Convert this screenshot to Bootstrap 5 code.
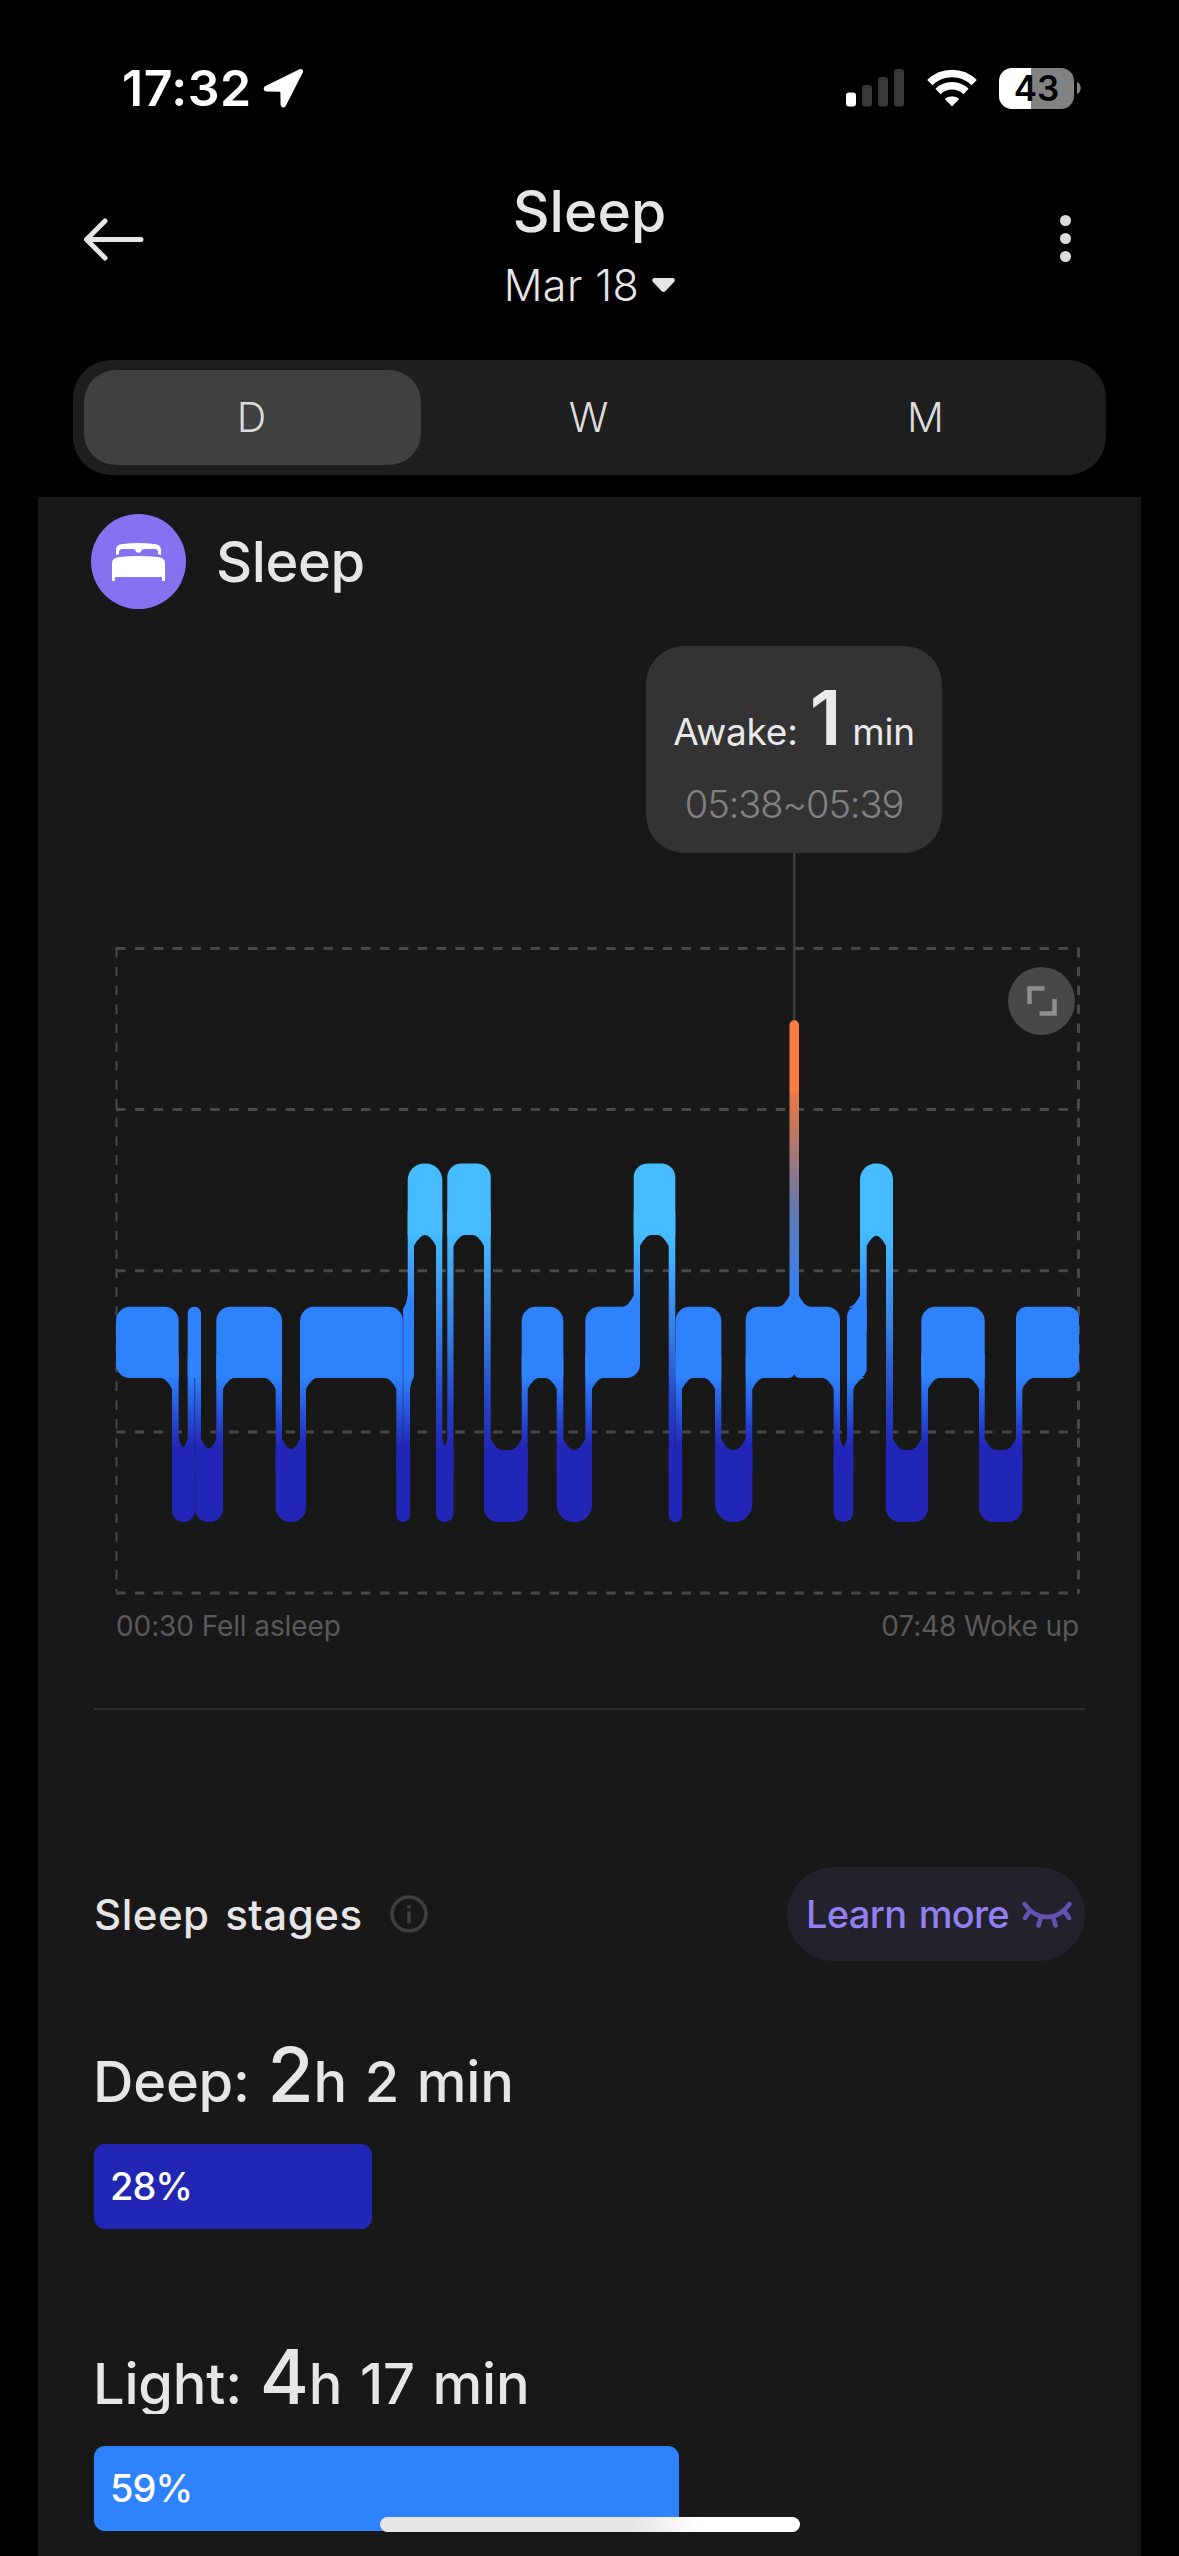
<!DOCTYPE html>
<html lang="en">
<head>
<meta charset="utf-8">
<meta name="viewport" content="width=device-width, initial-scale=1">
<title>Sleep</title>
<link rel="stylesheet" href="https://cdn.jsdelivr.net/npm/bootstrap@5.3.0/dist/css/bootstrap.min.css">
<style>
  body { background:#000; color:#e6e6e6; font-family:Inter,"Liberation Sans",sans-serif; width:1179px; height:2556px; overflow:hidden; position:relative; }
  svg { display:block; }
  .statusbar { height:176px; padding:0 98px 0 122px; color:#fff; }
  .clock { font-size:50px; font-weight:600; line-height:60px; letter-spacing:.5px; width:141px; white-space:nowrap; }
  .wifi { margin-left:23px; }
  .batt { width:75px; height:41px; margin-left:22px; border-radius:13px; background:linear-gradient(90deg,#fff 32px,#828282 32px); color:#000; font-size:35px; font-weight:600; line-height:41px; }
  .nub { margin-left:3px; }
  .topbar { height:146px; padding:0 83px; }
  .side-ico { height:126px; width:120px; }
  .page-title { font-size:57px; font-weight:500; line-height:70px; padding-top:1px; letter-spacing:0; }
  .page-date { font-size:43px; font-weight:300; line-height:76px; letter-spacing:.4px; }
  .caret { margin-left:13px; }
  .dots { margin-right:25px; }
  .seg { margin:37px 73px 0; height:115px; padding:10px 11px; border-radius:38px; background:#1e1e1e; }
  .seg .nav-link { color:#dcdcdc; font-size:41px; font-weight:300; line-height:94px; padding:0 2px 0 0; border-radius:32px; }
  .seg .nav-link.active { background:#404040; color:#dcdcdc; }
  .panel { margin:22px 38px 0 38px; height:2059px; background:#181818; padding-top:17px; }
  .panel-head { padding-left:53px; gap:30px; height:95px; }
  .bed-ico { width:95px; height:95px; background:#8472f0; }
  .panel-title { font-size:56px; font-weight:500; line-height:95px; padding-top:1px; letter-spacing:-.4px; }
  .chart-box { height:991px; }
  .tip { left:608px; top:37px; width:296px; height:207px; border-radius:38px; background:#333; }
  .tip-main { margin-top:54px; height:64px; line-height:64px; font-size:37px; color:#e9e9e9; letter-spacing:-.2px; white-space:nowrap; }
  .tip-num { font-size:75px; font-weight:600; line-height:0; margin:0 11px 0 12px; }
  .tip-time { margin-top:10px; font-size:38px; font-weight:300; line-height:60px; color:#828282; letter-spacing:-1.1px; white-space:nowrap; }
  .expand { left:970px; top:358px; width:67px; height:68px; background:#484848; }
  .axis { height:52px; line-height:52px; padding:0 62px 0 78px; font-size:28px; letter-spacing:-.1px; color:#5a5a5a; }
  .rule { margin:56px 56px 0 56px; height:2px; background:#2e2e2e; }
  .stages { margin:157px 56px 0 56px; height:94px; }
  .stages-title { font-size:42px; font-weight:500; letter-spacing:.5px; word-spacing:4px; }
  .info { margin-left:27px; }
  .more { width:298px; height:94px; border-radius:47px; background:#23212b; color:#9180f2; font-size:38px; font-weight:500; letter-spacing:-.7px; word-spacing:3px; padding:0 13px 0 19px; white-space:nowrap; border:0; }
  .stage-line { margin-left:55px; height:60px; line-height:60px; font-size:56px; font-weight:500; word-spacing:3px; letter-spacing:-.2px; clip-path:inset(-20px 0 0 0); white-space:nowrap; }
  .stage-num { font-size:75px; font-weight:500; line-height:0; }
  .deep-line { margin-top:91px; }
  .light-line { margin-top:125px; }
  .meter { margin:32px 0 0 56px; height:85px; width:992px; }
  .meter-fill { height:85px; line-height:85px; border-radius:11px; padding-left:16px; color:#fff; font-size:38px; font-weight:500; letter-spacing:-1px; }
  .home { left:380px; top:2517px; width:420px; height:15px; border-radius:8px; background:linear-gradient(90deg,#e6e6e6 60%,#fff 76%); }
</style>
</head>
<body>
<div class="statusbar d-flex align-items-center">
  <div class="clock">17:32</div>
  <svg width="41" height="40" viewBox="0 0 41 40"><path d="M36.500 1.200 2.500 18c-3 1.600-2 5.500 1.200 5.500l12.300.200c1 0 1.400.4 1.400 1.400l.2 11.500c0 3.200 4 4 5.400 1L39.800 4.600c1-2.200-1-4.500-3.300-3.400Z" fill="#fff"/></svg>
  <div class="d-flex align-items-center ms-auto">
    <svg width="58" height="38" viewBox="0 0 58 38"><rect y="23.500" width="10" height="14" rx="3" fill="#fff"/><g fill="#383838"><rect x="16" y="16" width="10" height="21.500" rx="3"/><rect x="32" y="8" width="10" height="29.500" rx="3"/><rect x="48" y="0" width="10" height="37.500" rx="3"/></g></svg>
    <svg class="wifi" width="50" height="38" viewBox="0 0 50 38" fill="none" stroke="#fff" stroke-width="7.500"><path d="M2.800 13.600a31.500 31.500 0 0 1 44.400 0"/><path d="M11 22.500a20 20 0 0 1 28 0"/><path d="M25 37.500 17.800 30a10.500 10.500 0 0 1 14.400 0Z" fill="#fff" stroke="none"/></svg>
    <div class="batt text-center">43</div>
    <svg class="nub" width="4" height="12" viewBox="0 0 4 12"><path d="M0 0c5 2 5 10 0 12Z" fill="#828282"/></svg>
  </div>
</div>

<header class="topbar d-flex justify-content-between">
  <div class="side-ico d-flex align-items-center"><svg width="61" height="43" viewBox="0 0 61 43" fill="none" stroke="#e6e6e6" stroke-width="5" stroke-linecap="round" stroke-linejoin="round"><path d="M58 21.500H4M22 3 3.500 21.500 22 40"/></svg></div>
  <div class="text-center">
    <div class="page-title">Sleep</div>
    <div class="page-date d-flex align-items-center justify-content-center">Mar 18<svg class="caret" width="23" height="15" viewBox="0 0 23 15"><path d="M2 0h19q3 1 1 4l-8.500 9q-2 2-4 0L1 4Q-1 1 2 0Z" fill="#e6e6e6"/></svg></div>
  </div>
  <div class="side-ico d-flex align-items-center justify-content-end"><svg class="dots" width="11" height="48" viewBox="0 0 11 48" fill="#dcdcdc"><circle cx="5.500" cy="5.500" r="5.500"/><circle cx="5.500" cy="23.500" r="5.500"/><circle cx="5.500" cy="41.500" r="5.500"/></svg></div>
</header>

<nav class="seg nav nav-pills nav-fill flex-nowrap" style="margin-top:38px">
  <a class="nav-link active col-4">D</a>
  <a class="nav-link col-4">W</a>
  <a class="nav-link col-4">M</a>
</nav>

<main class="panel">
  <div class="panel-head d-flex align-items-center">
    <div class="bed-ico rounded-circle d-flex align-items-center justify-content-center"><svg width="53" height="38" viewBox="0 0 53 38" fill="#fff"><path d="M4 12V7Q4 1 11 1q15.500-2 31 0 7 0 7 6v5l-3-.8V9q0-3-4-3h-9q-4 0-4 3l-2.500 1L24 9q0-3-4-3h-9q-4 0-4 3v2.200Z"/><path d="M0 38V20q0-5 7-6 19.500-2 39 0 7 1 7 6v18h-3v-4H3v4Z"/></svg></div>
    <div class="panel-title">Sleep</div>
  </div>

  <div class="chart-box position-relative">
    <svg id="chart" width="1102" height="991" viewBox="38 609 1102 991">
      <defs>
        <linearGradient id="stage" gradientUnits="userSpaceOnUse" x1="0" y1="1163" x2="0" y2="1522">
          <stop offset="0.195" stop-color="#46bcff"/><stop offset="0.400" stop-color="#2e82fd"/>
          <stop offset="0.595" stop-color="#2e82fd"/><stop offset="0.790" stop-color="#2126b6"/>
        </linearGradient>
        <linearGradient id="long" gradientUnits="userSpaceOnUse" x1="0" y1="1235" x2="0" y2="1450">
          <stop offset="0" stop-color="#46bcff"/><stop offset=".42" stop-color="#3782e6"/><stop offset=".8" stop-color="#2440c4"/><stop offset="1" stop-color="#2126b6"/>
        </linearGradient>
        <linearGradient id="awake" gradientUnits="userSpaceOnUse" x1="0" y1="1020" x2="0" y2="1307">
          <stop offset=".25" stop-color="#ff7d45"/><stop offset=".255" stop-color="#e87a45"/><stop offset=".37" stop-color="#c8775a"/><stop offset=".66" stop-color="#6379b4"/><stop offset="1" stop-color="#2e82fd"/>
        </linearGradient>
      </defs>
      <g stroke="#484848" stroke-width="3" stroke-dasharray="9.500 9.350" fill="none">
        <path d="M116 948.500H1079M116 1109.500H1079M116 1270.800H1079M116 1432H1079M116 1593H1079"/>
        <path d="M116.500 948V1593" stroke-width="2"/><path d="M1078.500 948V1593"/>
      </g>
      <path d="M794.300 853V1024" stroke="#444" stroke-width="2"/>
      <g id="bands"></g>
      <path d="M403 1314V1440M194.800 1378V1512" stroke="#1a2a80" stroke-opacity=".55" stroke-width="1"/>
    </svg>
    <div class="tip position-absolute text-center">
      <div class="tip-main">Awake:<span class="tip-num">1</span>min</div>
      <div class="tip-time">05:38~05:39</div>
    </div>
    <div class="expand position-absolute rounded-circle d-flex align-items-center justify-content-center"><svg width="30" height="30" viewBox="0 0 30 30" fill="none" stroke="#8e8e8e" stroke-width="4.500"><path d="M2.500 18V2.500h15M27.500 13v14.500H12.500"/></svg></div>
  </div>

  <div class="axis d-flex justify-content-between"><span>00:30 Fell asleep</span><span>07:48 Woke up</span></div>
  <div class="rule"></div>

  <div class="stages d-flex align-items-center">
    <span class="stages-title">Sleep stages</span>
    <svg class="info" width="38" height="38" viewBox="0 0 38 38" fill="none" stroke="#3e3e3e" stroke-width="3.600"><circle cx="19" cy="19" r="17"/><path d="M19 16.500v12M19 10v3.500"/></svg>
    <button class="more ms-auto d-flex align-items-center justify-content-between">Learn more<svg width="50" height="27" viewBox="0 0 50 27" fill="none" stroke="#6451b4" stroke-width="4.500" stroke-linecap="round"><path d="M2.500 3Q12 16 25 16T47.500 3M8 9.500 3 17M42 9.500 47 17M19 16 16.500 24.500M31 16 33.500 24.500"/></svg></button>
  </div>

  <div class="stage-line deep-line">Deep: <span class="stage-num">2</span>h 2 min</div>
  <div class="meter"><div class="meter-fill" style="width:28%;background:#2126b4">28%</div></div>
  <div class="stage-line light-line">Light: <span class="stage-num">4</span>h 17 min</div>
  <div class="meter"><div class="meter-fill" style="width:59%;background:#2e82fd">59%</div></div>
</main>
<div class="home position-absolute"></div>

<script src="https://cdn.jsdelivr.net/npm/bootstrap@5.3.0/dist/js/bootstrap.bundle.min.js"></script>
<script>
  // Vertical extent of each stage row: awake, REM, light, deep
  const rows = { A:[1020,1092], R:[1163.5,1235], L:[1306.8,1378], D:[1450,1522] };
  const rank = { A:0, R:1, L:2, D:3 };
  // Stage, start x, end x, optional corner radius
  const night = [
    ['L',116,178.7],['D',172,194.7],['L',187.7,201],['D',194.7,223],['L',216.3,282],['D',275.7,306],
    ['L',300,403],['D',396.3,410],['L',403,414,3],['R',407.7,442.3],['D',436,453.5],['R',447.3,490.7],
    ['D',484,527.7],['L',521.7,563.3],['D',556.7,592],['L',585.3,640],['R',633.7,675.3],['D',668.7,682],
    ['L',675.5,721.3],['D',715,752.3],['L',745.7,794.8,13,6],['A',789.5,799],['L',793.8,840,13,6],['D',833.7,853.3],
    ['L',847,866.7,9],['R',860,893],['D',886,928],['L',921.3,984.7],['D',979,1022.3],['L',1016,1079,11]
  ];
  let out = '';
  const add = (d, f) => out += `<path d="${d}" fill="url(#${f})"/>`;
  const radius = b => b[3] || (b[2]-b[1] < 40 ? (b[2]-b[1])*.48 : 14);

  // Links between neighbouring stages
  for (let i = 0; i < night.length - 1; i++) {
    const a = night[i], b = night[i+1], x0 = b[1], x1 = a[2];
    const up = rank[a[0]] < rank[b[0]] ? a : b, dn = up === a ? b : a;
    const y0 = rows[up[0]][1] - 24, y1 = rows[dn[0]][0] + 24;
    const grad = up[0] === 'R' && dn[0] === 'D' ? 'long' : 'stage';
    if (up[0] !== 'A') add(`M${x0} ${y0}H${x1}V${y1}H${x0}Z`, grad);
  }
  // Stage blocks with rounded outer corners and flared inner corners
  night.forEach((b, i) => {
    const [s, x0, x1] = b, [t, m] = rows[s], r = radius(b), p = night[i-1], n = night[i+1];
    if (s === 'A') { add(`M${x0} ${t+5}a4.750 4.750 0 0 1 9.500 0V1308H${x0}Z`, 'awake'); return; }
    const side = q => !q ? 0 : (rank[q[0]] > rank[s] ? 1 : -1); // 1 = goes down, -1 = goes up
    const L = side(p), R = side(n), small = b[4];
    const bl = small && p[0]==='A' ? small : r, br = small && n[0]==='A' ? small : r;
    const tl = L === -1 ? 0 : r, tr = R === -1 ? 0 : r, BL = L === 1 ? 0 : bl, BR = R === 1 ? 0 : br;
    const arc = (k, x, y) => k ? `A${k} ${k} 0 0 1 ${x} ${y}` : '';
    add(`M${x0+tl} ${t}H${x1-tr}${arc(tr,x1,t+tr)}V${m-BR}${arc(BR,x1-BR,m)}H${x0+BL}${arc(BL,x0,m-BL)}V${t+tl}${arc(tl,x0+tl,t)}Z`, 'stage');
    const lx = p ? p[2] : x0, rx = n ? n[1] : x1;
    [-1, 1].forEach(dir => {
      const y = dir === 1 ? m : t, both = L === dir && R === dir;
      const gap = both ? rx - lx : Math.min(rx - lx + 6, x1 - x0 - 6);
      if (gap < 1) return;
      const f = Math.min(10.500, both ? gap/2 : gap), e = both ? (10.500-f)*.5 : 0, h = 11;
      if (both && e) add(`M${lx} ${y}H${rx}V${y+dir*e}H${lx}Z`, 'stage');
      if (L === dir) add(`M${lx-.5} ${y-dir}H${lx+f}V${y+dir*e}Q${lx+f*.5} ${y+dir*(e+1)} ${lx} ${y+dir*h}H${lx-.5}Z`, 'stage');
      if (R === dir) add(`M${rx+.5} ${y-dir}H${rx-f}V${y+dir*e}Q${rx-f*.5} ${y+dir*(e+1)} ${rx} ${y+dir*h}H${rx+.5}Z`, 'stage');
    });
  });
  document.getElementById('bands').innerHTML = out;
</script>
</body>
</html>
